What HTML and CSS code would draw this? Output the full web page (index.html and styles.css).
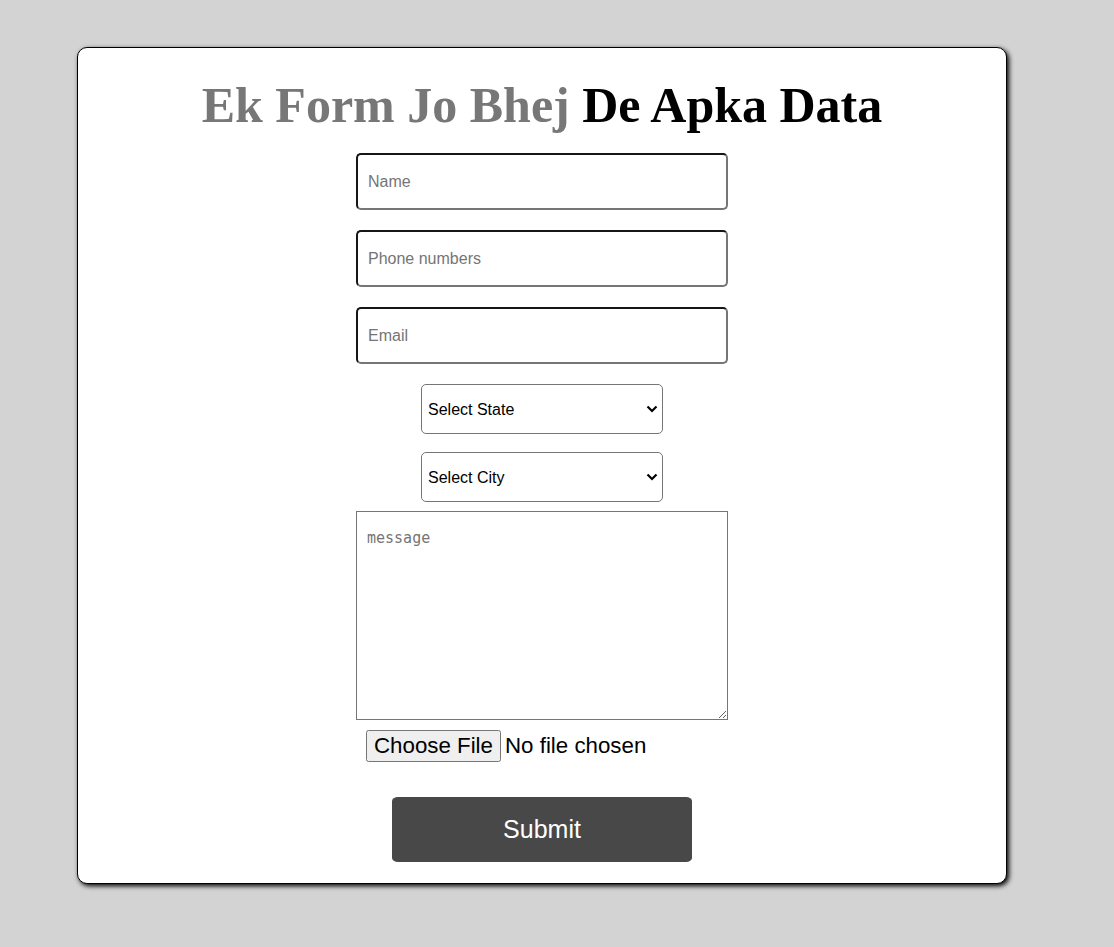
FILE: index.html
```html
<!DOCTYPE html>
<html>
<head>
<meta charset="utf-8">
<link rel="stylesheet" href="styles.css">
</head>
<body>
<div class="card">
  <h1 class="title"><span class="grey">Ek Form Jo Bhej</span> De Apka Data</h1>
  <form class="form">
    <input class="field" type="text" placeholder="Name">
    <input class="field" type="text" placeholder="Phone numbers">
    <input class="field" type="email" placeholder="Email">
    <div class="select-wrap">
      <select class="select"><option>Select State</option></select>
      <svg class="chev" width="12" height="8" viewBox="0 0 12 8"><path d="M1.5 1.5 L6 6 L10.5 1.5" fill="none" stroke="#000" stroke-width="2.2"/></svg>
    </div>
    <div class="select-wrap select-wrap-city">
      <select class="select"><option>Select City</option></select>
      <svg class="chev" width="12" height="8" viewBox="0 0 12 8"><path d="M1.5 1.5 L6 6 L10.5 1.5" fill="none" stroke="#000" stroke-width="2.2"/></svg>
    </div>
    <textarea class="message" placeholder="message"></textarea>
    <div class="file-row"><input class="file" type="file"></div>
    <button class="submit" type="button">Submit</button>
  </form>
</div>
</body>
</html>
```
FILE: styles.css
```css
html, body {
  margin: 0;
  padding: 0;
  background: #d3d3d3;
}
body {
  padding-top: 47px;
  padding-left: 77px;
  height: 947px;
  box-sizing: border-box;
}
.card {
  width: 930px;
  height: 837px;
  box-sizing: border-box;
  background: #fff;
  border: 1px solid #000;
  border-radius: 10px;
  box-shadow: 2px 2px 5px #000;
  display: flex;
  flex-direction: column;
  align-items: center;
}
.title {
  margin: 28px 0 0 0;
  font-family: "Liberation Serif", "Times New Roman", serif;
  font-weight: bold;
  font-size: 50px;
  line-height: 58px;
  color: #000;
  text-align: center;
}
.grey {
  color: #777;
}
.form {
  margin-top: 19px;
  display: flex;
  flex-direction: column;
  align-items: center;
  width: 372px;
}
.field {
  width: 372px;
  height: 57px;
  box-sizing: border-box;
  border-width: 2px;
  border-style: solid;
  border-color: #161616 #767676 #767676 #161616;
  border-radius: 5px;
  padding: 0 10px;
  font-family: "Liberation Sans", Arial, sans-serif;
  font-size: 16px;
  margin-bottom: 20px;
  outline: none;
}
.field::placeholder {
  color: #757575;
}
.select-wrap {
  position: relative;
  width: 242px;
  height: 50px;
  margin-bottom: 18px;
}
.select-wrap-city {
  margin-bottom: 9px;
}
.select {
  appearance: none;
  -webkit-appearance: none;
  width: 242px;
  height: 50px;
  box-sizing: border-box;
  border: 1px solid #767676;
  border-radius: 5px;
  background: #fff;
  font-family: "Liberation Sans", Arial, sans-serif;
  font-size: 16px;
  color: #000;
  padding: 0 6px;
  margin: 0;
}
.chev {
  position: absolute;
  right: 5px;
  top: 21px;
  pointer-events: none;
}
.message {
  display: block;
  width: 372px;
  height: 209px;
  box-sizing: border-box;
  border: 1px solid #767676;
  padding: 17px 10px 10px;
  font-family: "DejaVu Sans Mono", monospace;
  font-size: 15px;
  resize: both;
  margin: 0;
}
.message::placeholder {
  color: #757575;
}
.file-row {
  width: 372px;
  padding-left: 10px;
  box-sizing: border-box;
  margin-top: 10px;
  height: 32px;
}
.file {
  font-family: "Liberation Sans", Arial, sans-serif;
  font-size: 22.3px;
}
.submit {
  margin-top: 35px;
  width: 300px;
  height: 65px;
  border: none;
  border-radius: 6px / 4px;
  background: #484848;
  color: #fff;
  font-family: "Liberation Sans", Arial, sans-serif;
  font-size: 25px;
}
```
